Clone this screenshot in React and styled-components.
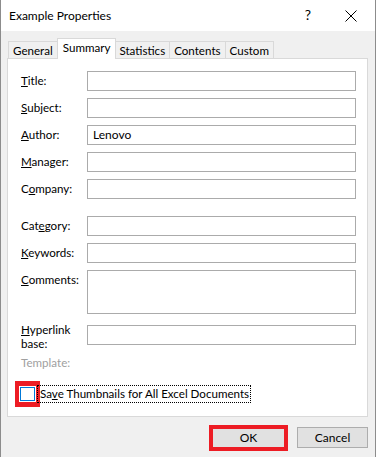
import React from "react";
import styled, { createGlobalStyle } from "styled-components";

const GlobalStyle = createGlobalStyle`
  html, body {
    margin: 0;
    padding: 0;
    background: #ffffff;
  }
  body {
    font-family: Lato, "Noto Sans", sans-serif;
    font-size: 11.6px;
    color: #000;
  }
`;

const tabs = ["General", "Summary", "Statistics", "Contents", "Custom"];

const topFields = [
  { pre: "", key: "T", post: "itle:", value: "" },
  { pre: "", key: "S", post: "ubject:", value: "" },
  { pre: "", key: "A", post: "uthor:", value: "Lenovo" },
  { pre: "", key: "M", post: "anager:", value: "" },
  { pre: "C", key: "o", post: "mpany:", value: "" }
];

const Key = ({ pre, k, post }) => (
  <>
    {pre}
    <u>{k}</u>
    {post}
  </>
);

const App = () => (
  <Window>
    <GlobalStyle />
    <TitleBar>
      <TitleText>Example Properties</TitleText>
      <TitleButtons>
        <HelpButton>?</HelpButton>
        <CloseButton>
          <svg width="12" height="12" viewBox="0 0 12 12">
            <path d="M0.5 0.5 L11.5 11.5 M11.5 0.5 L0.5 11.5" stroke="#000" strokeWidth="1" fill="none" />
          </svg>
        </CloseButton>
      </TitleButtons>
    </TitleBar>
    <Body>
      <TabRow>
        {tabs.map(t => (
          <Tab key={t} active={t === "Summary"}>
            {t}
          </Tab>
        ))}
      </TabRow>
      <Panel>
        <Fields>
          {topFields.map(f => (
            <Row key={f.post}>
              <Label>
                <Key pre={f.pre} k={f.key} post={f.post} />
              </Label>
              <Input>{f.value}</Input>
            </Row>
          ))}
        </Fields>
        <Separator />
        <Fields>
          <Row>
            <Label>
              <Key pre="Cat" k="e" post="gory:" />
            </Label>
            <Input />
          </Row>
          <Row>
            <Label>
              <Key pre="" k="K" post="eywords:" />
            </Label>
            <Input />
          </Row>
          <Row>
            <Label>
              <Key pre="" k="C" post="omments:" />
            </Label>
            <Input tall />
          </Row>
          <Row spaced>
            <TwoLineLabel>
              <Key pre="" k="H" post="yperlink" />
              <br />
              base:
            </TwoLineLabel>
            <Input />
          </Row>
        </Fields>
        <Template>Template:</Template>
        <CheckRow>
          <Highlight>
            <CheckBox />
          </Highlight>
          <CheckLabel>
            <Key pre="Sa" k="v" post="e Thumbnails for All Excel Documents" />
          </CheckLabel>
        </CheckRow>
      </Panel>
      <ButtonRow>
        <Highlight wide>
          <Button>OK</Button>
        </Highlight>
        <Button>Cancel</Button>
      </ButtonRow>
    </Body>
  </Window>
);

export default App;

const Window = styled.div`
  width: 374px;
  height: 457px;
  border-left: 1px solid #8c8c8c;
  border-right: 1px solid #8c8c8c;
  display: flex;
  flex-direction: column;
  background: #f0f0f0;
`;

const TitleBar = styled.div`
  height: 31px;
  flex-shrink: 0;
  background: #ffffff;
  display: flex;
  align-items: center;
  justify-content: space-between;
  padding-left: 8px;
  font-size: 12px;
`;

const TitleText = styled.span`
  margin-top: -1px;
`;

const TitleButtons = styled.div`
  display: flex;
  align-items: center;
  height: 100%;
`;

const HelpButton = styled.div`
  width: 24px;
  text-align: center;
  font-size: 14px;
  margin-right: 8px;
  margin-top: -2px;
`;

const CloseButton = styled.div`
  width: 46px;
  height: 100%;
  display: flex;
  align-items: center;
  justify-content: center;
  margin-right: 1px;
`;

const Body = styled.div`
  flex: 1;
  padding: 7px 7px 0 6px;
  display: flex;
  flex-direction: column;
`;

const TabRow = styled.div`
  display: flex;
  align-items: flex-end;
  height: 21px;
  padding-left: 1px;
  margin-bottom: -1px;
  position: relative;
  z-index: 1;
`;

const Tab = styled.div`
  box-sizing: border-box;
  height: ${p => (p.active ? "21px" : "18px")};
  padding: ${p => (p.active ? "0 5px 4px" : "0 4px 0")};
  margin: ${p => (p.active ? "0 -1px" : "0")};
  background: ${p => (p.active ? "#ffffff" : "#f0f0f0")};
  border: 1px solid #d9d9d9;
  border-bottom: ${p => (p.active ? "none" : "1px solid #d9d9d9")};
  border-left: ${p => (p.active ? "1px solid #d9d9d9" : "none")};
  &:first-child {
    border-left: 1px solid #d9d9d9;
  }
  display: flex;
  align-items: center;
  position: relative;
  z-index: ${p => (p.active ? 2 : 1)};
`;

const Panel = styled.div`
  background: #ffffff;
  border: 1px solid #d9d9d9;
  height: 359px;
  flex-shrink: 0;
  box-sizing: border-box;
  padding: 12px 11px 10px 13px;
  display: flex;
  flex-direction: column;
`;

const Fields = styled.div`
  display: flex;
  flex-direction: column;
  gap: 7px;
`;

const Row = styled.div`
  display: flex;
  align-items: flex-start;
  margin-top: ${p => (p.spaced ? "4px" : "0")};
`;

const Label = styled.div`
  width: 66px;
  height: 20px;
  line-height: 20px;
  flex-shrink: 0;
  white-space: nowrap;
`;

const TwoLineLabel = styled(Label)`
  line-height: 14px;
  height: 28px;
  margin: -2px 0 -6px;
`;

const Input = styled.div`
  flex: 1;
  box-sizing: border-box;
  height: ${p => (p.tall ? "44px" : "20px")};
  border: 1px solid #ababab;
  background: #ffffff;
  padding: 0 5px;
  line-height: 18px;
  font-size: 12px;
`;

const Separator = styled.div`
  height: 1px;
  background: #d6d6d6;
  margin: 10px 0 7px;
`;

const Template = styled.div`
  color: #a0a0a0;
  line-height: 20px;
  margin-top: 8px;
`;

const CheckRow = styled.div`
  display: flex;
  align-items: center;
  margin-top: 8px;
  margin-left: -6px;
`;

const Highlight = styled.div`
  box-sizing: border-box;
  width: ${p => (p.wide ? "79px" : "25px")};
  height: 26px;
  border: ${p => (p.wide ? "4px" : "5px")} solid #ed1c24;
  background: #ed1c24;
  display: flex;
  align-items: stretch;
  justify-content: stretch;
`;

const CheckBox = styled.div`
  flex: 1;
  box-sizing: border-box;
  border: 1px solid #0078d7;
  background: #ffffff;
  outline: 1px solid #ffffff;
  margin: 1px 0;
`;

const CheckLabel = styled.div`
  margin-left: -3px;
  padding: 0 1px 0 2px;
  line-height: 16px;
  border: 1px dotted #000;
`;

const ButtonRow = styled.div`
  flex: 1;
  display: flex;
  justify-content: flex-end;
  align-items: center;
  gap: 9px;
  padding-top: 1px;
`;

const Button = styled.div`
  box-sizing: border-box;
  width: 71px;
  height: 21px;
  flex-shrink: 0;
  background: #e1e1e1;
  border: 1px solid #adadad;
  display: flex;
  align-items: center;
  justify-content: center;
  font-size: 12px;
  ${Highlight} & {
    width: auto;
    height: auto;
    flex: 1;
    border: none;
  }
`;
